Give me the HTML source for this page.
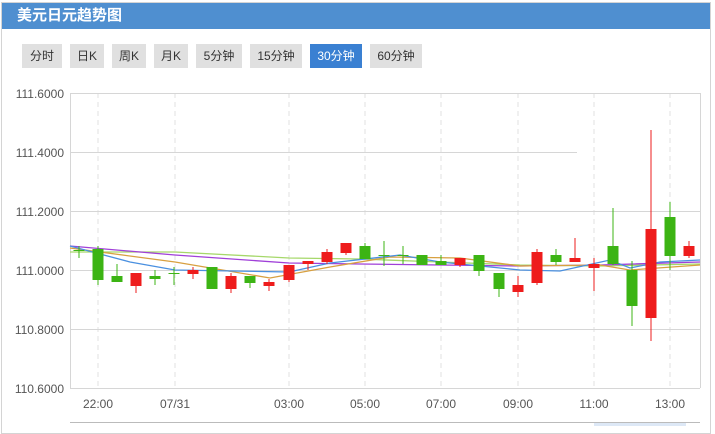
<!DOCTYPE html><html><head><meta charset="utf-8"><style>
body{margin:0;width:715px;height:426px;background:#fff;font-family:"Liberation Sans","Noto Sans CJK SC",sans-serif;position:relative;overflow:hidden}
.box{position:absolute;left:1px;top:2px;width:708px;height:430px;border:1px solid #d4d4d4}
.hd{position:absolute;left:2px;top:3px;width:708px;height:26px;background:#4f8fd0;color:#fff;font-weight:bold;font-size:15px;line-height:26px;padding-left:15px;box-sizing:border-box}
.b{position:absolute;top:44px;height:24px;line-height:24px;background:#e0e0e0;color:#333;font-size:12px;text-align:center}
.b.a{background:#3a80d2;color:#fff}
</style></head><body>
<div class="box"></div>
<div class="hd">美元日元趋势图</div>
<div class="b" style="left:22px;width:40px">分时</div>
<div class="b" style="left:70px;width:34px">日K</div>
<div class="b" style="left:112px;width:34px">周K</div>
<div class="b" style="left:154px;width:34px">月K</div>
<div class="b" style="left:196px;width:46px">5分钟</div>
<div class="b" style="left:250px;width:52px">15分钟</div>
<div class="b a" style="left:310px;width:52px">30分钟</div>
<div class="b" style="left:370px;width:52px">60分钟</div>
<svg style="position:absolute;left:0;top:0" width="715" height="426" font-family="Liberation Sans,sans-serif" font-size="12" fill="#555">
<g stroke="#e2e2e2" stroke-dasharray="5,4">
<line x1="98" y1="93" x2="98" y2="388"/><line x1="175" y1="93" x2="175" y2="388"/><line x1="289" y1="93" x2="289" y2="388"/><line x1="365" y1="93" x2="365" y2="388"/><line x1="441" y1="93" x2="441" y2="388"/><line x1="518" y1="93" x2="518" y2="388"/><line x1="594" y1="93" x2="594" y2="388"/><line x1="670" y1="93" x2="670" y2="388"/>
</g>
<g stroke="#d6d6d6">
<line x1="70" y1="93.5" x2="700" y2="93.5"/><line x1="70" y1="152.5" x2="577" y2="152.5"/><line x1="70" y1="211.5" x2="700" y2="211.5"/><line x1="70" y1="270.5" x2="700" y2="270.5"/><line x1="70" y1="329.5" x2="700" y2="329.5"/><line x1="70" y1="388.5" x2="700" y2="388.5"/>
<line x1="70.5" y1="93" x2="70.5" y2="388"/><line x1="700.5" y1="93" x2="700.5" y2="388"/>
<line x1="70" y1="422.5" x2="700" y2="422.5" stroke="#bbb"/>
</g>
<rect x="594" y="423" width="92" height="4" fill="#dde8f6"/>
<g text-anchor="end"><text x="64" y="98">111.6000</text><text x="64" y="157">111.4000</text><text x="64" y="216">111.2000</text><text x="64" y="275">111.0000</text><text x="64" y="334">110.8000</text><text x="64" y="393">110.6000</text></g>
<g text-anchor="middle"><text x="98" y="408">22:00</text><text x="175" y="408">07/31</text><text x="289" y="408">03:00</text><text x="365" y="408">05:00</text><text x="441" y="408">07:00</text><text x="518" y="408">09:00</text><text x="594" y="408">11:00</text><text x="670" y="408">13:00</text></g>
<g fill="none" stroke-width="1.3">
<polyline stroke="#a6d86a" points="70,252 175,252 289,258 360,259 440,262 520,265 600,266 700,264"/>
<polyline stroke="#a040d8" points="70,246 175,255 289,263 360,264 520,266 600,265 700,262"/>
<polyline stroke="#d8a040" points="70,248 175,262 270,278 330,267 390,257 460,258 520,266 600,265 630,270 700,265"/>
<polyline stroke="#4a90e0" points="70,246 130,262 175,270 289,272 330,263 400,255 440,262 520,270 560,271 610,260 630,268 660,262 700,260"/>
</g>
<g id="c"></g>
</svg>
<script>
var d=[[79,'g',250,251,246,258],[98,'g',249,280,246,285],[117,'g',276,282,264,282],[136,'r',273,286,273,293],[155,'g',276,279,270,285],[174,'g',273,274,267,285],[193,'r',270,274,267,279],[212,'g',267,289,267,289],[231,'r',276,289,273,293],[250,'g',276,283,276,288],[269,'r',282,286,279,291],[289,'r',265,280,265,282],[308,'r',261,264,261,270],[327,'r',252,262,249,264],[346,'r',243,253,243,255],[365,'g',246,259,243,259],[384,'g',255,256,241,266],[403,'g',255,256,246,264],[422,'g',255,265,255,265],[441,'g',261,265,255,265],[460,'r',258,265,258,267],[479,'g',255,271,255,276],[499,'g',273,289,273,297],[518,'r',285,292,276,297],[537,'r',252,283,249,285],[556,'g',255,262,249,265],[575,'r',258,262,238,262],[594,'r',264,268,258,291],[613,'g',246,264,208,265],[632,'g',270,306,261,326],[651,'r',229,318,130,341],[670,'g',217,256,202,270],[689,'r',246,256,241,258]];
var s='';d.forEach(function(c){var col=c[1]=='r'?'#ee1c1c':'#3cb414';s+='<line x1="'+c[0]+'" x2="'+c[0]+'" y1="'+c[4]+'" y2="'+c[5]+'" stroke="'+col+'"/><rect x="'+(c[0]-5.5)+'" y="'+c[2]+'" width="11" height="'+Math.max(1,c[3]-c[2])+'" fill="'+col+'"/>';});
document.getElementById('c').innerHTML=s;
</script>
</body></html>
